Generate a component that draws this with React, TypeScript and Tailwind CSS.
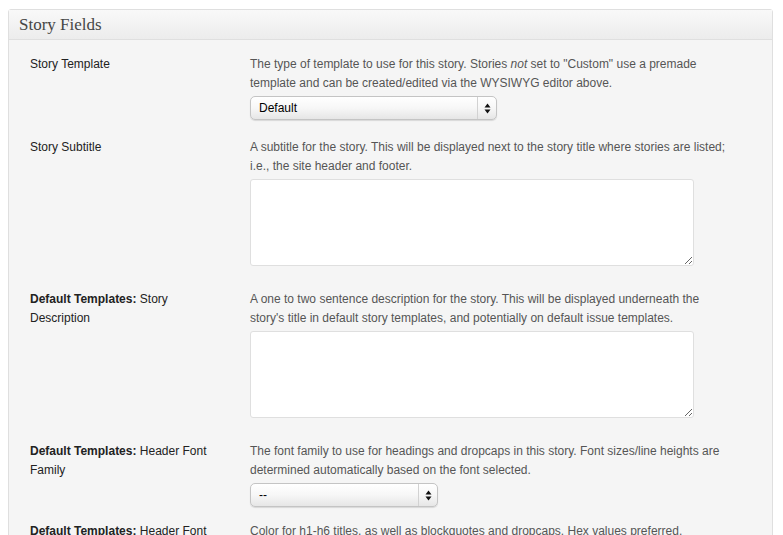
import React from "react";

const sans = { fontFamily: '"Liberation Sans", Arial, Helvetica, sans-serif' };

function UpDown() {
  return (
    <svg width="7" height="11" viewBox="0 0 7 11" className="block">
      <path d="M3.5 0.5 L6.5 4.5 L0.5 4.5 Z" fill="#111" />
      <path d="M0.5 6.5 L6.5 6.5 L3.5 10.5 Z" fill="#111" />
    </svg>
  );
}

function FakeSelect({ value, width }: { value: string; width: string }) {
  return (
    <div
      className={`relative mt-[3px] h-[24px] ${width} rounded-[5px] border border-[#c4c4c4] bg-gradient-to-b from-white via-[#f7f7f7] to-[#e6e6e6] shadow-[0_1px_1px_rgba(0,0,0,0.12)] flex items-center`}
    >
      <select
        defaultValue={value}
        className="appearance-none bg-transparent outline-none w-full h-full pl-[8px] text-[12px] text-black"
        style={sans}
      >
        <option>{value}</option>
      </select>
      <div className="absolute right-0 top-0 bottom-0 w-[19px] border-l border-[#d2d2d2] flex items-center justify-center pointer-events-none">
        <UpDown />
      </div>
    </div>
  );
}

function Row({
  label,
  children,
  pb,
}: {
  label: React.ReactNode;
  children: React.ReactNode;
  pb: string;
}) {
  return (
    <div className={`flex ${pb}`}>
      <div className="w-[241px] shrink-0 pl-[21px] pr-[30px] text-[12px] leading-[19px] text-[#222]">
        {label}
      </div>
      <div className="w-[480px] text-[12px] leading-[19px] text-[#555]">{children}</div>
    </div>
  );
}

function Area() {
  return (
    <textarea className="block mt-[3px] w-[444px] h-[87px] bg-white border border-[#dfdfdf] rounded-[3px] outline-none" />
  );
}

export default function App() {
  return (
    <div className="w-[783px] h-[535px] bg-white overflow-hidden" style={sans}>
      <div className="ml-[8px] mt-[9px] w-[765px] border border-[#dfdfdf] rounded-t-[3px] bg-[#f5f5f5]">
        <div className="h-[30px] px-[10px] flex items-center border-b border-[#dfdfdf] bg-gradient-to-b from-[#f9f9f9] to-[#ececec]">
          <h3
            className="text-[17px] text-[#464646] leading-none"
            style={{ fontFamily: '"Liberation Serif", Georgia, "Times New Roman", serif' }}
          >
            Story Fields
          </h3>
        </div>
        <div className="pt-[15px]">
          <Row label="Story Template" pb="pb-[18px]">
            <p>
              The type of template to use for this story. Stories <em>not</em> set to "Custom" use a premade
              template and can be created/edited via the WYSIWYG editor above.
            </p>
            <FakeSelect value="Default" width="w-[247px]" />
          </Row>
          <Row label="Story Subtitle" pb="pb-[24px]">
            <p>
              A subtitle for the story. This will be displayed next to the story title where stories are listed;
              i.e., the site header and footer.
            </p>
            <Area />
          </Row>
          <Row
            label={
              <>
                <strong>Default Templates:</strong> Story Description
              </>
            }
            pb="pb-[24px]"
          >
            <p>
              A one to two sentence description for the story. This will be displayed underneath the story's title
              in default story templates, and potentially on default issue templates.
            </p>
            <Area />
          </Row>
          <Row
            label={
              <>
                <strong>Default Templates:</strong> Header Font Family
              </>
            }
            pb="pb-[15px]"
          >
            <p>
              The font family to use for headings and dropcaps in this story. Font sizes/line heights are
              determined automatically based on the font selected.
            </p>
            <FakeSelect value="--" width="w-[188px]" />
          </Row>
          <Row
            label={
              <>
                <strong>Default Templates:</strong> Header Font Color
              </>
            }
            pb="pb-[18px]"
          >
            <p>Color for h1-h6 titles, as well as blockquotes and dropcaps. Hex values preferred.</p>
          </Row>
        </div>
      </div>
    </div>
  );
}
